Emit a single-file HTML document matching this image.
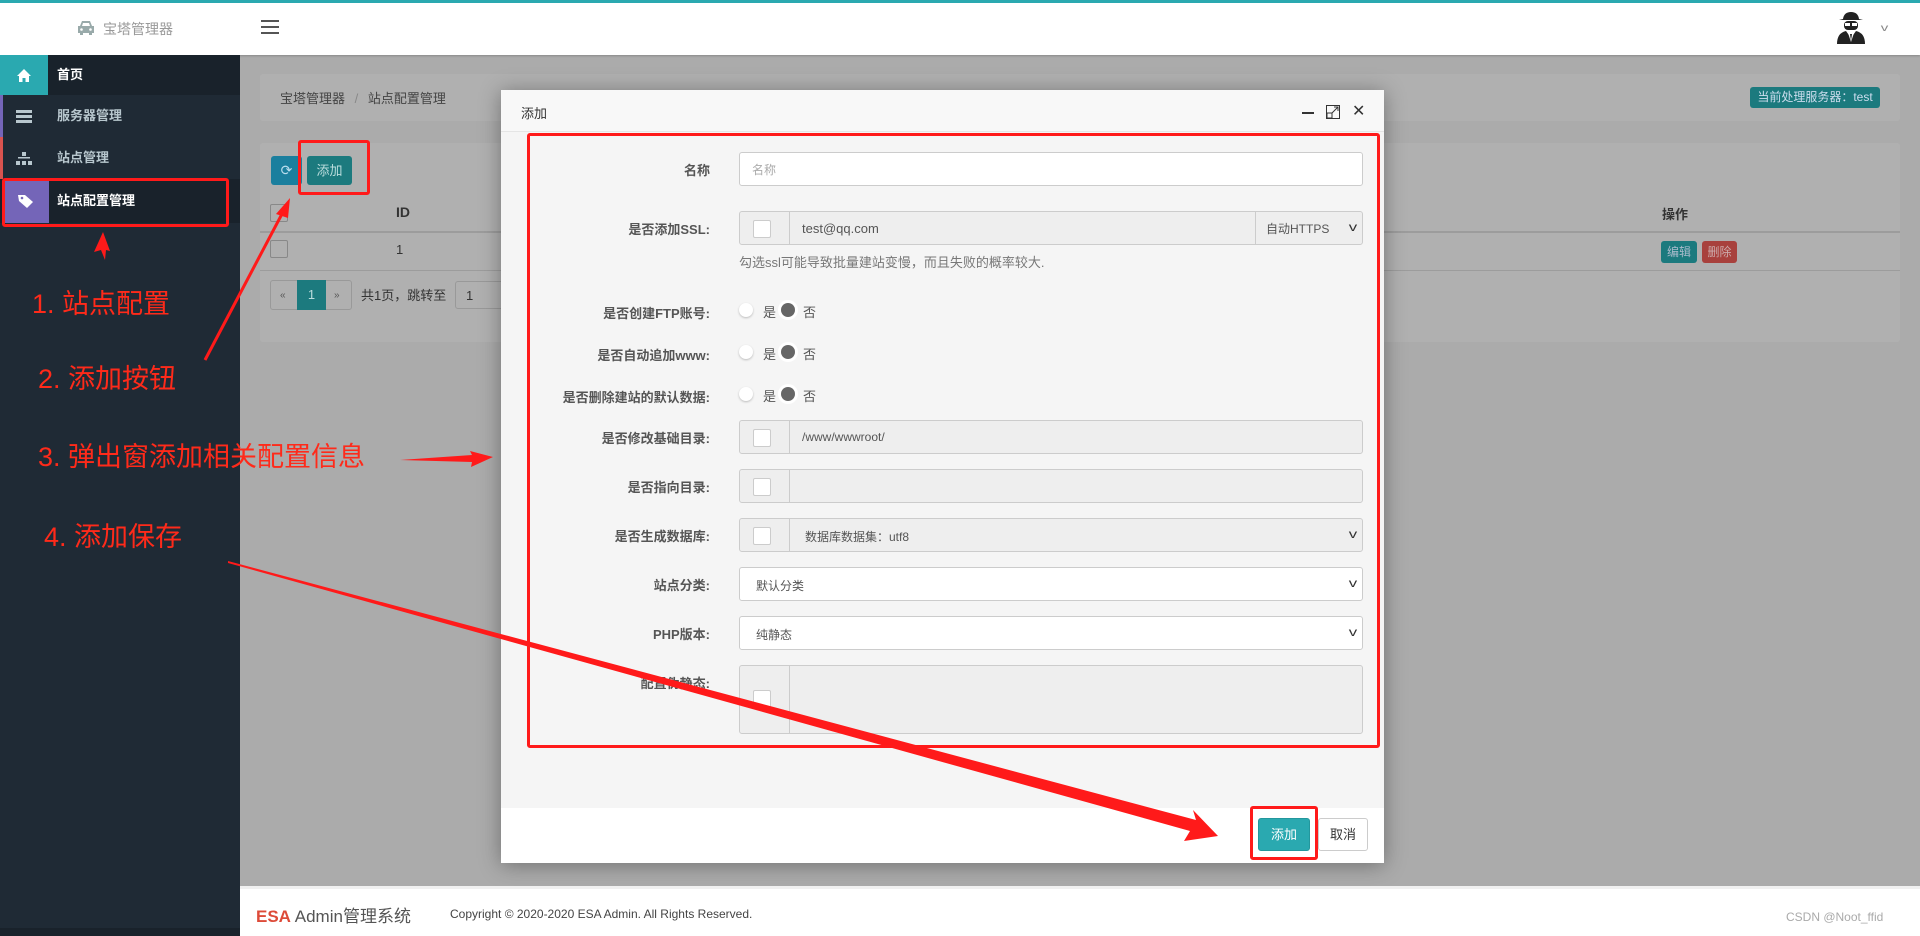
<!DOCTYPE html>
<html><head><meta charset="utf-8"><style>
*{box-sizing:border-box;margin:0;padding:0}
body{width:1920px;height:936px;overflow:hidden;position:relative;font-family:"Liberation Sans","Noto Sans CJK SC",sans-serif;font-size:13px;color:#333;background:#ababab}
.abs{position:absolute}
.hdr{left:0;top:0;width:1920px;height:55px;background:#fff;border-top:3px solid #2aa9b0;box-shadow:0 1px 2px rgba(0,0,0,.2)}
.side{left:0;top:55px;width:240px;height:881px;background:#1f2a35}
.srow{position:absolute;left:0;width:240px;height:42px;color:#b8c7ce;font-size:13px;font-weight:bold}
.srow .ic{position:absolute;left:0;top:0;width:48px;height:100%;display:flex;align-items:center;justify-content:center}
.srow .tx{position:absolute;left:57px;top:0;line-height:42px}
.panel{background:#b0b0b0;border-radius:3px}
.lbl{position:absolute;right:1210px;width:220px;text-align:right;font-weight:bold;color:#555;font-size:13px}
.inp{position:absolute;left:739px;width:624px;height:34px;border:1px solid #ccc;border-radius:3px;background:#eee}
.addon{position:absolute;left:0;top:0;width:50px;height:100%;border-right:1px solid #ccc;}
.addon i{position:absolute;left:13px;top:8px;width:18px;height:18px;background:#fff;border:1px solid #ccc;border-radius:2px}
.chev{position:absolute;right:6px;top:8px;font-size:12px;color:#333;transform:scaleX(1.4)}
.ann{position:absolute;color:#ff2a1a;font-size:27px;font-family:"Liberation Sans","Noto Sans CJK SC",sans-serif;white-space:nowrap}
.rad{position:absolute;width:14px;height:14px;border-radius:50%}
</style></head><body>
<div class="abs hdr">
 <svg class="abs" style="left:77px;top:17px" width="18" height="16" viewBox="0 0 18 16"><path d="M3 6 L5 1 H13 L15 6 H17 V13 H15 V15 H12 V13 H6 V15 H3 V13 H1 V6Z M5 6 H13 L12 3 H6Z" fill="#9aa" fill-rule="evenodd"/><circle cx="4.5" cy="9.5" r="1.3" fill="#fff"/><circle cx="13.5" cy="9.5" r="1.3" fill="#fff"/></svg>
 <div class="abs" style="left:103px;top:16px;color:#999;font-size:14px">宝塔管理器</div>
 <div class="abs" style="left:261px;top:17px;width:18px;height:2px;background:#555;box-shadow:0 6px 0 #555,0 12px 0 #555"></div>
 <svg class="abs" style="left:1836px;top:7px" width="30" height="35" viewBox="0 0 30 35"><path d="M7 9 Q8 2 15 2 Q22 2 23 9 L27 10 L3 10Z" fill="#222"/><rect x="8" y="11" width="14" height="9" rx="4" fill="#222"/><rect x="9" y="13" width="5" height="3" fill="#fff"/><rect x="16" y="13" width="5" height="3" fill="#fff"/><path d="M1 34 Q1 23 10 21 L15 28 L20 21 Q29 23 29 34Z" fill="#222"/><path d="M12 23 L15 32 L18 23Z" fill="#fff"/><path d="M14 24 L15 31 L16 24Z" fill="#222"/></svg>
 <div class="abs" style="left:1882px;top:20px;color:#888;font-size:10px;transform:scaleX(1.5)">v</div>
</div>
<div class="abs side">
 <div class="srow" style="top:0;height:40px;background:#19222b;color:#fff"><div class="ic" style="background:#2aa9b0"><svg width="14" height="13" viewBox="0 0 14 13"><path d="M7 0 L14 7 H12 V13 H8.5 V9 H5.5 V13 H2 V7 H0Z" fill="#fff"/></svg></div><div class="tx" style="line-height:40px">首页</div></div>
 <div class="srow" style="top:40px;border-left:3px solid #7465b8"><div class="ic" style="left:-3px"><svg width="16" height="13"><rect x="0" y="0" width="16" height="3" fill="#b8c7ce"/><rect x="0" y="5" width="16" height="3" fill="#b8c7ce"/><rect x="0" y="10" width="16" height="3" fill="#b8c7ce"/></svg></div><div class="tx" style="left:54px">服务器管理</div></div>
 <div class="srow" style="top:82px;border-left:3px solid #d9534f"><div class="ic" style="left:-3px"><svg width="16" height="13"><rect x="6" y="0" width="4" height="4" fill="#b8c7ce"/><rect x="2" y="5" width="12" height="1.5" fill="#b8c7ce"/><rect x="0" y="9" width="4" height="4" fill="#b8c7ce"/><rect x="6" y="9" width="4" height="4" fill="#b8c7ce"/><rect x="12" y="9" width="4" height="4" fill="#b8c7ce"/></svg></div><div class="tx" style="left:54px">站点管理</div></div>
 <div class="srow" style="top:124px;background:#19222b;color:#fff;height:44px"><div class="ic" style="left:5px;width:44px;background:#7465b8"><svg width="18" height="14" viewBox="0 0 18 14"><path d="M0 1 L7 1 L15 8 L9 14 L1 7Z" fill="#fff"/><circle cx="4" cy="4" r="1.3" fill="#7465b8"/></svg></div><div class="tx" style="line-height:44px">站点配置管理</div></div>
</div>
<div class="abs" style="left:2px;top:178px;width:227px;height:49px;border:3px solid #ff1a1a;border-radius:3px"></div>
<!-- content -->
<div class="abs panel" style="left:260px;top:74px;width:1640px;height:47px"></div>
<div class="abs" style="left:280px;top:88px;color:#444;font-size:13px">宝塔管理器 <span style="color:#888;margin:0 6px">/</span> 站点配置管理</div>
<div class="abs" style="left:1750px;top:87px;width:130px;height:21px;background:#1c7a7e;color:#cde;border-radius:3px;font-size:12px;line-height:21px;text-align:center">当前处理服务器：test</div>
<div class="abs panel" style="left:260px;top:143px;width:1640px;height:199px"></div>
<div class="abs" style="left:271px;top:156px;width:31px;height:29px;background:#1b7f9e;border-radius:3px;color:#bde;text-align:center;line-height:29px;font-size:14px">⟳</div>
<div class="abs" style="left:307px;top:156px;width:45px;height:29px;background:#1c7a7e;border-radius:3px;color:#bdd;text-align:center;line-height:29px">添加</div>
<div class="abs" style="left:298px;top:140px;width:72px;height:55px;border:3px solid #ff1a1a;border-radius:3px"></div>
<div class="abs" style="left:270px;top:204px;width:18px;height:18px;border:1px solid #888;border-radius:2px"></div>
<div class="abs" style="left:396px;top:204px;font-weight:bold;font-size:14px;color:#333">ID</div>
<div class="abs" style="left:260px;top:231px;width:1640px;height:2px;background:#9c9c9c"></div>
<div class="abs" style="left:270px;top:240px;width:18px;height:18px;border:1px solid #888;border-radius:2px"></div>
<div class="abs" style="left:396px;top:242px;color:#333">1</div>
<div class="abs" style="left:260px;top:270px;width:1640px;height:1px;background:#9c9c9c"></div>
<div class="abs" style="left:1662px;top:204px;font-weight:bold;color:#333">操作</div>
<div class="abs" style="left:1661px;top:241px;width:36px;height:22px;background:#1c7a7e;border-radius:3px;color:#abc;font-size:12px;text-align:center;line-height:22px">编辑</div>
<div class="abs" style="left:1702px;top:241px;width:35px;height:22px;background:#a8413d;border-radius:3px;color:#caa;font-size:12px;text-align:center;line-height:22px">删除</div>
<div class="abs" style="left:270px;top:280px;width:82px;height:30px;border:1px solid #999;border-radius:3px"></div>
<div class="abs" style="left:280px;top:290px;font-size:10px;color:#555">«</div>
<div class="abs" style="left:297px;top:280px;width:29px;height:30px;background:#1c7a7e;color:#bdd;text-align:center;line-height:30px">1</div>
<div class="abs" style="left:334px;top:290px;font-size:10px;color:#555">»</div>
<div class="abs" style="left:361px;top:285px;color:#333;font-size:13px">共1页，跳转至</div>
<div class="abs" style="left:455px;top:281px;width:50px;height:28px;border:1px solid #999;border-radius:3px;padding:6px 10px">1</div>
<!-- modal -->
<div class="abs" style="left:501px;top:90px;width:883px;height:773px;background:#f5f5f5;box-shadow:0 2px 20px rgba(0,0,0,.35)">
 <div class="abs" style="left:0;top:0;width:883px;height:42px;background:#f8f8f8;border-bottom:1px solid #e5e5e5"></div>
 <div class="abs" style="left:20px;top:13px;font-size:13px;color:#333">添加</div>
 <div class="abs" style="left:801px;top:22px;width:12px;height:2px;background:#333"></div>
 <svg class="abs" style="left:825px;top:15px" width="14" height="14" viewBox="0 0 14 14"><rect x="0.5" y="0.5" width="13" height="13" fill="none" stroke="#333"/><rect x="1" y="8" width="5" height="5" fill="none" stroke="#333"/><path d="M6 8 L12 2 M8 2 H12 V6" stroke="#333" fill="none"/></svg>
 <div class="abs" style="left:851px;top:11px;font-size:16px;color:#333">✕</div>
 <div class="abs" style="left:0;top:718px;width:883px;height:55px;background:#fff"></div>
 <div class="abs" style="left:757px;top:728px;width:52px;height:33px;background:#2aa9b0;border:1px solid #249;border-color:#23979d;border-radius:3px;color:#fff;text-align:center;line-height:31px">添加</div>
 <div class="abs" style="left:817px;top:728px;width:50px;height:33px;background:#fff;border:1px solid #ccc;border-radius:3px;color:#333;text-align:center;line-height:31px">取消</div>
</div>
<div class="abs" style="left:1250px;top:806px;width:68px;height:54px;border:3px solid #ff1a1a;border-radius:3px"></div>
<!-- form -->
<div class="lbl" style="top:160px">名称</div>
<div class="inp" style="top:152px;background:#fff;padding:8px 12px;color:#aaa;font-size:12px">名称</div>
<div class="lbl" style="top:219px">是否添加SSL:</div>
<div class="inp" style="top:211px"><div class="addon"><i></i></div><div class="abs" style="left:62px;top:9px;color:#555">test@qq.com</div><div class="abs" style="left:515px;top:0;width:108px;height:32px;border-left:1px solid #ccc;padding:8px 10px;font-size:12px;color:#555">自动HTTPS</div><span class="chev">v</span></div>
<div class="abs" style="left:739px;top:252px;color:#777;font-size:13px">勾选ssl可能导致批量建站变慢，而且失败的概率较大.</div>
<div class="lbl" style="top:303px">是否创建FTP账号:</div>
<div class="lbl" style="top:345px">是否自动追加www:</div>
<div class="lbl" style="top:387px">是否删除建站的默认数据:</div>
<div class="rad" style="left:739px;top:303px;background:#fff;box-shadow:0 1px 2px #bbb"></div><div class="abs" style="left:763px;top:302px;color:#555">是</div><div class="rad" style="left:781px;top:303px;background:#666;box-shadow:0 0 0 3px #fff"></div><div class="abs" style="left:803px;top:302px;color:#555">否</div>
<div class="rad" style="left:739px;top:345px;background:#fff;box-shadow:0 1px 2px #bbb"></div><div class="abs" style="left:763px;top:344px;color:#555">是</div><div class="rad" style="left:781px;top:345px;background:#666;box-shadow:0 0 0 3px #fff"></div><div class="abs" style="left:803px;top:344px;color:#555">否</div>
<div class="rad" style="left:739px;top:387px;background:#fff;box-shadow:0 1px 2px #bbb"></div><div class="abs" style="left:763px;top:386px;color:#555">是</div><div class="rad" style="left:781px;top:387px;background:#666;box-shadow:0 0 0 3px #fff"></div><div class="abs" style="left:803px;top:386px;color:#555">否</div>
<div class="lbl" style="top:428px">是否修改基础目录:</div>
<div class="inp" style="top:420px"><div class="addon"><i></i></div><div class="abs" style="left:62px;top:9px;color:#555;font-size:12px">/www/wwwroot/</div></div>
<div class="lbl" style="top:477px">是否指向目录:</div>
<div class="inp" style="top:469px"><div class="addon"><i></i></div></div>
<div class="lbl" style="top:526px">是否生成数据库:</div>
<div class="inp" style="top:518px"><div class="addon"><i></i></div><div class="abs" style="left:65px;top:9px;color:#555;font-size:12px">数据库数据集：utf8</div><span class="chev">v</span></div>
<div class="lbl" style="top:575px">站点分类:</div>
<div class="inp" style="top:567px;background:#fff"><div class="abs" style="left:16px;top:9px;color:#555;font-size:12px">默认分类</div><span class="chev">v</span></div>
<div class="lbl" style="top:624px">PHP版本:</div>
<div class="inp" style="top:616px;background:#fff"><div class="abs" style="left:16px;top:9px;color:#555;font-size:12px">纯静态</div><span class="chev">v</span></div>
<div class="lbl" style="top:673px">配置伪静态:</div>
<div class="inp" style="top:665px;height:69px"><div class="addon"><i style="top:24px"></i></div></div>
<div class="abs" style="left:527px;top:133px;width:853px;height:615px;border:3px solid #ff1a1a;border-radius:3px"></div>
<!-- footer -->
<div class="abs" style="left:240px;top:886px;width:1680px;height:50px;background:#fff;border-top:3px solid #f0f0f0"></div>
<div class="abs" style="left:256px;top:902px;font-size:17px;color:#555"><b style="color:#dd4b39">ESA</b> Admin管理系统</div>
<div class="abs" style="left:450px;top:907px;font-size:12px;color:#444">Copyright © 2020-2020 ESA Admin. All Rights Reserved.</div>
<div class="abs" style="left:1786px;top:910px;font-size:12px;color:#aaa">CSDN @Noot_ffid</div>
<div class="abs" style="left:0;top:928px;width:240px;height:8px;background:#19222b"></div>
<!-- annotations -->
<div class="ann" style="left:32px;top:282px">1. 站点配置</div>
<div class="ann" style="left:38px;top:357px">2. 添加按钮</div>
<div class="ann" style="left:38px;top:435px">3. 弹出窗添加相关配置信息</div>
<div class="ann" style="left:44px;top:515px">4. 添加保存</div>
<svg class="abs" style="left:0;top:0" width="1920" height="936">
 <path d="M103 232 L94 252 L101 250 L105 260 L106 250 L110 251Z" fill="#ff1a1a"/>
 <path d="M205 360 L283 212" stroke="#ff1a1a" stroke-width="3"/>
 <path d="M290 198 L276 214 L288 218Z" fill="#ff1a1a"/>
 <path d="M400 460 L472 455 L470 451 L493 457 L471 467 L472 462Z" fill="#ff1a1a"/>
 <path d="M228 561 L1196 820 L1193 810 L1218 836 L1184 841 L1190 831 L228 563Z" fill="#ff1a1a"/>
</svg>
</body></html>
